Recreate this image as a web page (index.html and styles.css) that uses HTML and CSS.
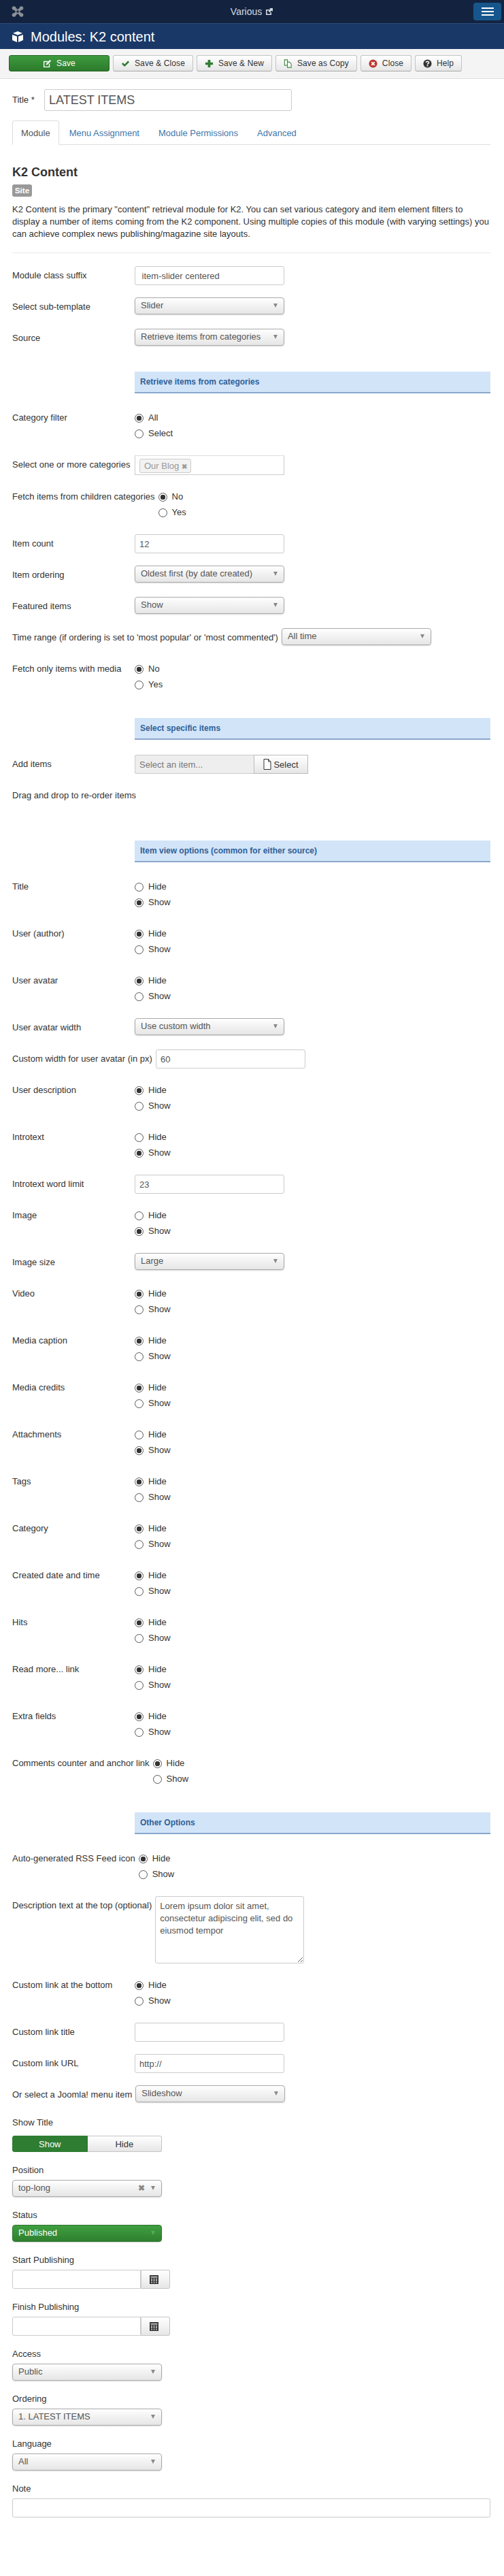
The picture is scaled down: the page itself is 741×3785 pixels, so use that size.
FILE: index.html
```html
<!DOCTYPE html>
<html lang="en">
<head>
<meta charset="UTF-8">
<title>Modules: K2 content</title>
<link rel="stylesheet" href="styles.css">
</head>
<body>

<!-- Top bar -->
<div class="navbar">
  <svg class="logo" viewBox="0 0 18 16"><path d="M4 3l10 10M14 3L4 13" stroke="#8b9098" stroke-width="4"/><circle cx="3.5" cy="3" r="2.8" fill="#8b9098"/><circle cx="14.5" cy="3" r="2.8" fill="#8b9098"/><circle cx="3.5" cy="13" r="2.8" fill="#8b9098"/><circle cx="14.5" cy="13" r="2.8" fill="#8b9098"/><rect x="7.5" y="6.5" width="3" height="3" fill="#13233f"/></svg>
  <a class="site-name" href="#">Various
    <svg class="ext" viewBox="0 0 12 12"><path d="M1 3h6v1.5H2.5v5h5V7H9v4H1z" fill="#d5dbe5"/><path d="M6 1h5v5L9.4 4.4 6.5 7.3 4.7 5.5l2.9-2.9z" fill="#d5dbe5"/></svg>
  </a>
  <button class="menu-btn"><span></span><span></span><span></span></button>
</div>
<div class="subhead">
  <svg class="cube" viewBox="0 0 18 18"><path d="M9 1l7 2.8L9 6.6 2 3.8z" fill="#fff"/><path d="M1 6l7 2.6V17l-7-3z" fill="#fff"/><path d="M17 6l-7 2.6V17l7-3z" fill="#fff"/></svg>
  <h1>Modules: K2 content</h1>
</div>

<!-- Toolbar -->
<div class="toolbar">
  <button class="btn btn-save">
    <svg class="ico" viewBox="0 0 14 14"><path d="M1 3h8L7.6 4.5H2.5v7h7V8L11 6.5V13H1z" fill="#fff"/><path d="M5 9.2l.5-2.4L11.2 1 13 2.8 7.3 8.6z" fill="#fff"/></svg>
    Save</button>
  <button class="btn">
    <svg class="ico" viewBox="0 0 14 14"><path d="M1 7.5l2-2 2.6 2.6L11 2.5l2 2-7.4 7.4z" fill="#2f7d32"/></svg>
    Save &amp; Close</button>
  <button class="btn">
    <svg class="ico" viewBox="0 0 14 14"><path d="M5 1h4v4h4v4H9v4H5V9H1V5h4z" fill="#2f7d32"/></svg>
    Save &amp; New</button>
  <button class="btn">
    <svg class="ico" viewBox="0 0 14 14"><path d="M1.5 1h4.5v8.5H1.5zM6 4.5h3l3 3v5.5H6z" fill="#fff" stroke="#3f8a3f" stroke-width="1.2"/></svg>
    Save as Copy</button>
  <button class="btn">
    <svg class="ico" viewBox="0 0 14 14"><circle cx="7" cy="7" r="6.5" fill="#bd362f"/><path d="M4.5 4.5l5 5M9.5 4.5l-5 5" stroke="#fff" stroke-width="2"/></svg>
    Close</button>
  <button class="btn">
    <svg class="ico" viewBox="0 0 14 14"><circle cx="7" cy="7" r="6.5" fill="#333"/><path d="M4.8 5.4C4.9 3 9.2 3 9.2 5.3 9.2 6.8 7 6.7 7 8.4" fill="none" stroke="#fff" stroke-width="1.7"/><rect x="6" y="9.3" width="2" height="1.9" fill="#fff"/></svg>
    Help</button>
</div>

<div class="content">

  <div class="title-row">
    <label class="title-label">Title *</label>
    <input class="title-input" type="text" value="LATEST ITEMS">
  </div>

  <ul class="tabs">
    <li class="active"><a href="#">Module</a></li>
    <li><a href="#">Menu Assignment</a></li>
    <li><a href="#">Module Permissions</a></li>
    <li><a href="#">Advanced</a></li>
  </ul>

  <h2>K2 Content</h2>
  <span class="badge">Site</span>
  <p class="intro">K2 Content is the primary "content" retrieval module for K2. You can set various category and item element filters to display a number of items coming from the K2 component. Using multiple copies of this module (with varying settings) you can achieve complex news publishing/magazine site layouts.</p>
  <hr>

  <div class="row">
    <label>Module class suffix</label>
    <input class="field" type="text" value=" item-slider centered">
  </div>
  <div class="row">
    <label>Select sub-template</label>
    <div class="select"><span>Slider</span><i class="arrow"></i></div>
  </div>
  <div class="row">
    <label>Source</label>
    <div class="select"><span>Retrieve items from categories</span><i class="arrow"></i></div>
  </div>

  <div class="band">Retrieve items from categories</div>

  <div class="row">
    <label>Category filter</label>
    <div class="radios">
      <label><input type="radio" name="catfilter" checked>All</label>
      <label><input type="radio" name="catfilter">Select</label>
    </div>
  </div>
  <div class="row">
    <label>Select one or more categories</label>
    <div class="chosen"><span class="chip">Our Blog <b>&#10006;</b></span></div>
  </div>
  <div class="row">
    <label>Fetch items from children categories</label>
    <div class="radios">
      <label><input type="radio" name="children" checked>No</label>
      <label><input type="radio" name="children">Yes</label>
    </div>
  </div>
  <div class="row">
    <label>Item count</label>
    <input class="field" type="text" value="12">
  </div>
  <div class="row">
    <label>Item ordering</label>
    <div class="select"><span>Oldest first (by date created)</span><i class="arrow"></i></div>
  </div>
  <div class="row">
    <label>Featured items</label>
    <div class="select"><span>Show</span><i class="arrow"></i></div>
  </div>
  <div class="row">
    <label>Time range (if ordering is set to 'most popular' or 'most commented')</label>
    <div class="select"><span>All time</span><i class="arrow"></i></div>
  </div>
  <div class="row">
    <label>Fetch only items with media</label>
    <div class="radios">
      <label><input type="radio" name="media" checked>No</label>
      <label><input type="radio" name="media">Yes</label>
    </div>
  </div>

  <div class="band">Select specific items</div>

  <div class="row">
    <label>Add items</label>
    <div class="picker">
      <input type="text" placeholder="Select an item..." disabled>
      <button>
        <svg class="ico-file" viewBox="0 0 12 16"><path d="M1 .5h6.5l3.5 3.5v11.5H1z" fill="#fff" stroke="#333"/><path d="M7.5 .5V4H11" fill="none" stroke="#333"/></svg>
        Select</button>
    </div>
  </div>
  <div class="row row-drag">
    <label>Drag and drop to re-order items</label>
  </div>

  <div class="band">Item view options (common for either source)</div>

  <div class="row">
    <label>Title</label>
    <div class="radios">
      <label><input type="radio" name="r1">Hide</label>
      <label><input type="radio" name="r1" checked>Show</label>
    </div>
  </div>
  <div class="row">
    <label>User (author)</label>
    <div class="radios">
      <label><input type="radio" name="r2" checked>Hide</label>
      <label><input type="radio" name="r2">Show</label>
    </div>
  </div>
  <div class="row">
    <label>User avatar</label>
    <div class="radios">
      <label><input type="radio" name="r3" checked>Hide</label>
      <label><input type="radio" name="r3">Show</label>
    </div>
  </div>
  <div class="row">
    <label>User avatar width</label>
    <div class="select"><span>Use custom width</span><i class="arrow"></i></div>
  </div>
  <div class="row">
    <label>Custom width for user avatar (in px)</label>
    <input class="field" type="text" value="60">
  </div>
  <div class="row">
    <label>User description</label>
    <div class="radios">
      <label><input type="radio" name="r4" checked>Hide</label>
      <label><input type="radio" name="r4">Show</label>
    </div>
  </div>
  <div class="row">
    <label>Introtext</label>
    <div class="radios">
      <label><input type="radio" name="r5">Hide</label>
      <label><input type="radio" name="r5" checked>Show</label>
    </div>
  </div>
  <div class="row">
    <label>Introtext word limit</label>
    <input class="field" type="text" value="23">
  </div>
  <div class="row">
    <label>Image</label>
    <div class="radios">
      <label><input type="radio" name="r6">Hide</label>
      <label><input type="radio" name="r6" checked>Show</label>
    </div>
  </div>
  <div class="row">
    <label>Image size</label>
    <div class="select"><span>Large</span><i class="arrow"></i></div>
  </div>
  <div class="row">
    <label>Video</label>
    <div class="radios">
      <label><input type="radio" name="r7" checked>Hide</label>
      <label><input type="radio" name="r7">Show</label>
    </div>
  </div>
  <div class="row">
    <label>Media caption</label>
    <div class="radios">
      <label><input type="radio" name="r8" checked>Hide</label>
      <label><input type="radio" name="r8">Show</label>
    </div>
  </div>
  <div class="row">
    <label>Media credits</label>
    <div class="radios">
      <label><input type="radio" name="r9" checked>Hide</label>
      <label><input type="radio" name="r9">Show</label>
    </div>
  </div>
  <div class="row">
    <label>Attachments</label>
    <div class="radios">
      <label><input type="radio" name="r10">Hide</label>
      <label><input type="radio" name="r10" checked>Show</label>
    </div>
  </div>
  <div class="row">
    <label>Tags</label>
    <div class="radios">
      <label><input type="radio" name="r11" checked>Hide</label>
      <label><input type="radio" name="r11">Show</label>
    </div>
  </div>
  <div class="row">
    <label>Category</label>
    <div class="radios">
      <label><input type="radio" name="r12" checked>Hide</label>
      <label><input type="radio" name="r12">Show</label>
    </div>
  </div>
  <div class="row">
    <label>Created date and time</label>
    <div class="radios">
      <label><input type="radio" name="r13" checked>Hide</label>
      <label><input type="radio" name="r13">Show</label>
    </div>
  </div>
  <div class="row">
    <label>Hits</label>
    <div class="radios">
      <label><input type="radio" name="r14" checked>Hide</label>
      <label><input type="radio" name="r14">Show</label>
    </div>
  </div>
  <div class="row">
    <label>Read more... link</label>
    <div class="radios">
      <label><input type="radio" name="r15" checked>Hide</label>
      <label><input type="radio" name="r15">Show</label>
    </div>
  </div>
  <div class="row">
    <label>Extra fields</label>
    <div class="radios">
      <label><input type="radio" name="r16" checked>Hide</label>
      <label><input type="radio" name="r16">Show</label>
    </div>
  </div>
  <div class="row">
    <label>Comments counter and anchor link</label>
    <div class="radios">
      <label><input type="radio" name="r17" checked>Hide</label>
      <label><input type="radio" name="r17">Show</label>
    </div>
  </div>

  <div class="band">Other Options</div>

  <div class="row">
    <label>Auto-generated RSS Feed icon</label>
    <div class="radios">
      <label><input type="radio" name="r18" checked>Hide</label>
      <label><input type="radio" name="r18">Show</label>
    </div>
  </div>
  <div class="row">
    <label>Description text at the top (optional)</label>
    <textarea class="area">Lorem ipsum dolor sit amet, consectetur adipiscing elit, sed do eiusmod tempor</textarea>
  </div>
  <div class="row">
    <label>Custom link at the bottom</label>
    <div class="radios">
      <label><input type="radio" name="r19" checked>Hide</label>
      <label><input type="radio" name="r19">Show</label>
    </div>
  </div>
  <div class="row">
    <label>Custom link title</label>
    <input class="field" type="text">
  </div>
  <div class="row">
    <label>Custom link URL</label>
    <input class="field" type="text" value="http://">
  </div>
  <div class="row">
    <label>Or select a Joomla! menu item</label>
    <div class="select"><span>Slideshow</span><i class="arrow"></i></div>
  </div>

  <!-- Side options, stacked -->
  <div class="stack">
    <label class="toggle-label">Show Title</label>
    <div class="toggle">
      <button class="on">Show</button>
      <button>Hide</button>
    </div>
  </div>
  <div class="stack">
    <label>Position</label>
    <div class="select"><span>top-long</span><b class="clear">&#10006;</b><i class="arrow"></i></div>
  </div>
  <div class="stack">
    <label>Status</label>
    <div class="select select-green"><span>Published</span><i class="arrow"></i></div>
  </div>
  <div class="stack">
    <label>Start Publishing</label>
    <div class="date">
      <input type="text">
      <button>
        <svg class="ico-cal" viewBox="0 0 13 14"><path d="M0 1h13v13H0z" fill="#333"/><path d="M1.5 3h10v1.5h-10z" fill="#ddd"/><path d="M2 6h2v1.4H2zM5.5 6h2v1.4h-2zM9 6h2v1.4H9zM2 8.6h2V10H2zM5.5 8.6h2V10h-2zM9 8.6h2V10H9zM2 11.2h2v1.4H2zM5.5 11.2h2v1.4h-2zM9 11.2h2v1.4H9z" fill="#ddd"/></svg>
      </button>
    </div>
  </div>
  <div class="stack">
    <label>Finish Publishing</label>
    <div class="date">
      <input type="text">
      <button>
        <svg class="ico-cal" viewBox="0 0 13 14"><path d="M0 1h13v13H0z" fill="#333"/><path d="M1.5 3h10v1.5h-10z" fill="#ddd"/><path d="M2 6h2v1.4H2zM5.5 6h2v1.4h-2zM9 6h2v1.4H9zM2 8.6h2V10H2zM5.5 8.6h2V10h-2zM9 8.6h2V10H9zM2 11.2h2v1.4H2zM5.5 11.2h2v1.4h-2zM9 11.2h2v1.4H9z" fill="#ddd"/></svg>
      </button>
    </div>
  </div>
  <div class="stack">
    <label>Access</label>
    <div class="select"><span>Public</span><i class="arrow"></i></div>
  </div>
  <div class="stack">
    <label>Ordering</label>
    <div class="select"><span>1. LATEST ITEMS</span><i class="arrow"></i></div>
  </div>
  <div class="stack">
    <label>Language</label>
    <div class="select"><span>All</span><i class="arrow"></i></div>
  </div>
  <div class="stack">
    <label>Note</label>
    <input class="field field-full" type="text">
  </div>

</div>

</body>
</html>
```

FILE: styles.css
```css
* {
  box-sizing: border-box;
}
body {
  margin: 0;
  background: #fff;
  color: #333;
  font-family: "Liberation Sans", Arial, sans-serif;
  font-size: 13px;
  line-height: 18px;
}

/* top bars */
.navbar {
  position: relative;
  display: flex;
  align-items: center;
  justify-content: center;
  height: 35px;
  background: #13233f;
  border-bottom: 1px solid #2c4a7c;
}
.logo {
  position: absolute;
  left: 17px;
  top: 9px;
  width: 18px;
  height: 16px;
}
.site-name {
  color: #d5dbe5;
  font-size: 14px;
  text-decoration: none;
}
.ext {
  width: 12px;
  height: 12px;
  margin-left: 1px;
  vertical-align: -1px;
}
.menu-btn {
  position: absolute;
  right: 4px;
  top: 4px;
  width: 41px;
  height: 26px;
  padding: 0 0 0 1px;
  background: #17568c;
  border: 0;
  border-radius: 4px;
  display: flex;
  flex-direction: column;
  align-items: center;
  justify-content: center;
  gap: 3px;
}
.menu-btn span {
  display: block;
  width: 18px;
  height: 2px;
  background: #fff;
}
.subhead {
  display: flex;
  align-items: center;
  height: 37px;
  padding-left: 17px;
  background: #1a3867;
}
.cube {
  width: 18px;
  height: 18px;
  margin-right: 10px;
}
.subhead h1 {
  margin: 0;
  color: #fff;
  font-size: 20px;
  font-weight: normal;
  line-height: 24px;
}

/* toolbar */
.toolbar {
  display: flex;
  gap: 5px;
  height: 44px;
  padding: 9px 0 0 13px;
  background: #f4f4f4;
  border-bottom: 1px solid #dedede;
}
.btn {
  display: flex;
  align-items: center;
  justify-content: center;
  height: 24px;
  padding: 0 11px;
  background: linear-gradient(#fff, #e6e6e6);
  border: 1px solid #c4c4c4;
  border-bottom-color: #a8a8a8;
  border-radius: 3px;
  color: #333;
  font-family: inherit;
  font-size: 12px;
  letter-spacing: .1px;
}
.ico {
  width: 13px;
  height: 13px;
  margin-right: 7px;
}
.btn-save {
  width: 148px;
  background: linear-gradient(#3d9b3d, #2c7a2c);
  border-color: #236323;
  color: #fff;
}

/* main column */
.content {
  padding: 15px 20px 0 18px;
}
.title-row {
  display: flex;
  align-items: center;
  margin-bottom: 14px;
}
.title-label {
  width: 47px;
}
.title-input {
  width: 364px;
  height: 32px;
  padding: 4px 6px;
  border: 1px solid #ccc;
  border-radius: 3px;
  color: #555;
  font-family: inherit;
  font-size: 18px;
}
.tabs {
  display: flex;
  height: 36px;
  margin: 0 0 30px;
  padding: 0;
  list-style: none;
  border-bottom: 1px solid #ddd;
}
.tabs li {
  margin-right: 2px;
}
.tabs a {
  display: block;
  height: 36px;
  padding: 9px 13px;
  border: 1px solid transparent;
  border-width: 1px 0;
  color: #3f76ab;
  text-decoration: none;
}
.tabs .active a {
  padding: 9px 12px;
  background: #fff;
  border: 1px solid #ddd;
  border-bottom-color: #fff;
  border-radius: 4px 4px 0 0;
  color: #555;
}
h2 {
  margin: 0 0 8px;
  font-size: 18px;
  line-height: 20px;
}
.badge {
  display: block;
  width: 29px;
  height: 18px;
  background: #999;
  border-radius: 3px;
  color: #fff;
  font-size: 11.8px;
  font-weight: bold;
  line-height: 18px;
  text-align: center;
}
.intro {
  margin: 10px 0 18px;
}
hr {
  height: 1px;
  margin: 0 0 19px;
  background: #e8e8e8;
  border: 0;
}

/* form rows */
.row {
  display: flex;
  align-items: flex-start;
  min-height: 28px;
  margin-bottom: 18px;
}
.row > label {
  flex: none;
  min-width: 175px;
  margin-right: 5px;
  padding-top: 5px;
}
.row-drag {
  min-height: 45px;
}
.field {
  width: 220px;
  height: 28px;
  padding: 4px 6px;
  background: #fff;
  border: 1px solid #ccc;
  border-radius: 3px;
  color: #555;
  font-family: inherit;
  font-size: 13px;
}
.field-full {
  display: block;
  width: 100%;
}
.select {
  display: flex;
  align-items: center;
  width: 220px;
  height: 25px;
  padding: 0 9px 2px 8px;
  background: linear-gradient(#fff, #f4f4f4 40%, #e6e6e6);
  border: 1px solid #aaa;
  border-radius: 4px;
  box-shadow: 0 1px 2px rgba(0,0,0,.15);
  color: #555;
}
.select span {
  flex: 1;
}
.arrow {
  width: 0;
  height: 0;
  border-top: 6px solid #888;
  border-left: 3px solid transparent;
  border-right: 3px solid transparent;
}
.clear {
  margin-right: 9px;
  color: #888;
  font-size: 12px;
}
.select-green {
  background: linear-gradient(#3f9f3f, #2f802f);
  border-color: #2b742b;
  color: #fff;
}
.select-green .arrow {
  border-top-color: #5fa85f;
}

.radios {
  padding-top: 5px;
  margin-bottom: 0;
}
.radios label {
  display: flex;
  align-items: flex-start;
  height: 18px;
  margin-bottom: 5px;
}
.radios input {
  appearance: none;
  width: 13px;
  height: 13px;
  margin: 3px 7px 0 0;
  background: #fff;
  border: 1px solid #555;
  border-radius: 50%;
}
.radios input:checked {
  background: radial-gradient(circle, #333 0 3.5px, #fff 4px);
}

.band {
  height: 32px;
  margin: 35px 0 22px 180px;
  padding: 6px 8px 0;
  background: #d2e4f8;
  border-bottom: 2px solid #8aa8cc;
  color: #2f5f97;
  font-size: 12px;
  font-weight: bold;
}

.chosen {
  width: 220px;
  height: 29px;
  padding: 4px 6px;
  border: 1px solid #ccc;
  border-top-color: #ddd;
}
.chip {
  display: inline-block;
  height: 21px;
  padding: 1px 5px 0 6px;
  background: #f2f2f2;
  border: 1px solid #ccc;
  border-radius: 3px;
  color: #999;
  white-space: nowrap;
}
.chip b {
  font-size: 10px;
}

.picker {
  display: flex;
  height: 28px;
}
.picker input {
  width: 175px;
  padding: 4px 6px;
  background: #eee;
  border: 1px solid #ccc;
  border-right: 0;
  border-radius: 3px 0 0 3px;
  font-family: inherit;
  font-size: 13px;
}
.picker input::placeholder {
  color: #777;
}
.picker button {
  display: flex;
  align-items: center;
  justify-content: center;
  width: 80px;
  padding: 0;
  background: linear-gradient(#fff, #e6e6e6);
  border: 1px solid #bbb;
  color: #333;
  font-family: inherit;
  font-size: 13px;
}
.ico-file {
  width: 12px;
  height: 16px;
  margin-right: 3px;
}
.area {
  width: 219px;
  height: 99px;
  padding: 5px 6px;
  border: 1px solid #ccc;
  border-radius: 3px;
  color: #555;
  font-family: inherit;
  font-size: 13px;
  line-height: 18px;
}

/* stacked options at the end */
.stack {
  margin-bottom: 18px;
}
.stack > label {
  display: block;
  margin-bottom: 5px;
}
.stack > .toggle-label {
  margin-bottom: 10px;
}
.toggle {
  display: flex;
  width: 220px;
  height: 24px;
}
.toggle button {
  flex: 1;
  padding: 0;
  background: linear-gradient(#fff, #e6e6e6);
  border: 1px solid #c4c4c4;
  border-left: 0;
  border-radius: 0 3px 3px 0;
  color: #333;
  font-family: inherit;
  font-size: 13px;
}
.toggle .on {
  background: #2f7d32;
  border: 1px solid #2f7d32;
  border-radius: 3px 0 0 3px;
  color: #fff;
}
.date {
  display: flex;
  width: 232px;
  height: 28px;
}
.date input {
  flex: 1;
  min-width: 0;
  border: 1px solid #ccc;
  border-radius: 3px 0 0 3px;
}
.date button {
  width: 43px;
  padding: 0 4px 0 0;
  background: linear-gradient(#fff, #e6e6e6);
  border: 1px solid #c4c4c4;
  border-left-color: #ccc;
  border-radius: 0 3px 3px 0;
}
.ico-cal {
  display: block;
  width: 13px;
  height: 14px;
  margin: 0 auto;
}
```
